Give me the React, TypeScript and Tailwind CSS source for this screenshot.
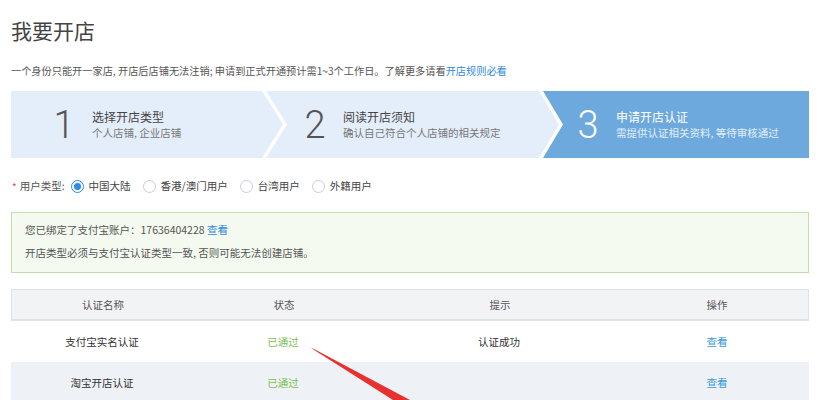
const font = { fontFamily: '"Noto Sans CJK SC", "Noto Sans", sans-serif' };

type Step = { n: string; title: string; sub: string };

const steps: Step[] = [
  { n: '1', title: '选择开店类型', sub: '个人店铺, 企业店铺' },
  { n: '2', title: '阅读开店须知', sub: '确认自己符合个人店铺的相关规定' },
  { n: '3', title: '申请开店认证', sub: '需提供认证相关资料, 等待审核通过' },
];

function Radio({ label, checked }: { label: string; checked?: boolean }) {
  return (
    <label className="flex items-center gap-[5px] mr-[12px]">
      <span
        className={
          checked
            ? 'w-[13px] h-[13px] rounded-full border border-[#2d8ce6] bg-white flex items-center justify-center'
            : 'w-[13px] h-[13px] rounded-full border border-[#c9cdd3] bg-white'
        }
      >
        {checked && <span className="w-[7px] h-[7px] rounded-full bg-[#2d8ce6]" />}
      </span>
      <span className="text-[#444]">{label}</span>
    </label>
  );
}

function StepContent({ step, active }: { step: Step; active?: boolean }) {
  return (
    <div className="flex items-center h-full">
      <span
        className={
          active
            ? 'text-[38px] leading-none font-light text-white w-[22px] text-center'
            : 'text-[38px] leading-none font-light text-[#555] w-[22px] text-center'
        }
        style={{ fontFamily: 'Roboto, "Liberation Sans", sans-serif' }}
      >
        {step.n}
      </span>
      <div className="ml-[17px] flex flex-col">
        <span className={active ? 'text-[12px] leading-[17px] text-white' : 'text-[12px] leading-[17px] text-[#444]'}>
          {step.title}
        </span>
        <span className={active ? 'text-[10.5px] leading-[16px] text-[#e2effb]' : 'text-[10.5px] leading-[16px] text-[#777]'}>
          {step.sub}
        </span>
      </div>
    </div>
  );
}

const rows = [
  { name: '支付宝实名认证', status: '已通过', tip: '认证成功', bg: 'bg-white' },
  { name: '淘宝开店认证', status: '已通过', tip: '', bg: 'bg-[#eef1f5]' },
];

export default function App() {
  return (
    <div className="relative w-[828px] h-[400px] overflow-hidden bg-white" style={font}>
      <div className="w-[798px] ml-[11px] text-[10.5px]">
        <h1 className="pt-[17px] text-[21px] leading-[26px] text-[#444]">我要开店</h1>

        <p className="mt-[20px] leading-[16px] text-[#555] text-[10.2px]">
          一个身份只能开一家店, 开店后店铺无法注销; 申请到正式开通预计需1~3个工作日。了解更多请看
          <span className="text-[#2f8ae0]">开店规则必看</span>
        </p>

        <div className="mt-[12px] flex h-[67px]">
          <div className="w-[272px] shrink-0 bg-[#e4eefa] pl-[42px] [clip-path:polygon(0_0,251px_0,272px_50%,251px_100%,0_100%)]">
            <StepContent step={steps[0]} />
          </div>
          <div className="w-[293px] shrink-0 -ml-[17px] bg-[#e4eefa] pl-[38px] [clip-path:polygon(0_0,273px_0,293px_50%,273px_100%,0_100%,21px_50%)]">
            <StepContent step={steps[1]} />
          </div>
          <div className="flex-1 -ml-[16px] bg-[#6da9dc] pl-[34px] [clip-path:polygon(0_0,100%_0,100%_100%,0_100%,20px_50%)]">
            <StepContent step={steps[2]} active />
          </div>
        </div>

        <div className="mt-[20px] flex items-center h-[16px]">
          <span className="text-[#e5484d] ml-[1px] mr-[3px] text-[10px]">*</span>
          <span className="text-[#555] mr-[6px]">用户类型:</span>
          <Radio label="中国大陆" checked />
          <Radio label="香港/澳门用户" />
          <Radio label="台湾用户" />
          <Radio label="外籍用户" />
        </div>

        <div className="mt-[18px] border border-[#c5deae] bg-[#f4faef] pl-[13px] pt-[9px] pb-[11px] leading-[16px] text-[#555]">
          <p>
            您已绑定了支付宝账户：17636404228 <span className="text-[#2f8ae0]">查看</span>
          </p>
          <p className="mt-[7px]">开店类型必须与支付宝认证类型一致, 否则可能无法创建店铺。</p>
        </div>

        <div className="mt-[16px]">
          <div className="flex h-[32px] items-center bg-[#f2f3f5] border border-[#dfe2e6] border-b-2 text-[#555]">
            <div className="w-[182px] text-center">认证名称</div>
            <div className="w-[180px] text-center">状态</div>
            <div className="w-[252px] text-center">提示</div>
            <div className="flex-1 text-center">操作</div>
          </div>
          {rows.map((r) => (
            <div key={r.name} className={`flex h-[41px] items-center ${r.bg} text-[#333]`}>
              <div className="w-[182px] text-center">{r.name}</div>
              <div className="w-[180px] text-center text-[#7fbf55]">{r.status}</div>
              <div className="w-[252px] text-center">{r.tip}</div>
              <div className="flex-1 text-center text-[#3a9be0]">查看</div>
            </div>
          ))}
        </div>
      </div>

      <svg className="absolute left-0 top-0 pointer-events-none" width="828" height="400" viewBox="0 0 828 400">
        <polygon points="311,348 314,349 410,400 393,400" fill="#e8302f" />
      </svg>
    </div>
  );
}
